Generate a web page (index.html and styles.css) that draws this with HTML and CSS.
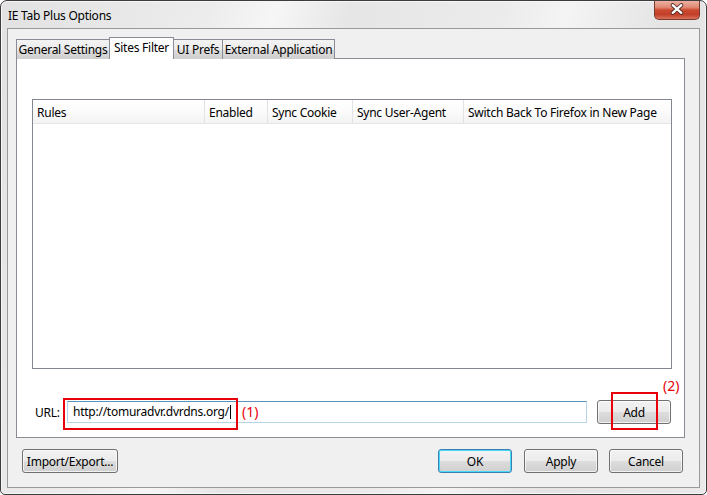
FILE: index.html
```html
<!DOCTYPE html>
<html lang="en">
<head>
    <meta charset="UTF-8">
    <title>IE Tab Plus Options</title>
    <link rel="stylesheet" href="styles.css">
</head>
<body>
<div class="window">
    <div class="titlebar">
        <span class="title">IE Tab Plus Options</span>
        <div class="close-btn">
            <svg width="46" height="19" viewBox="0 0 46 19">
                <path d="M18.5 5 L27.5 13 M27.5 5 L18.5 13" stroke="#4a2a24" stroke-width="4.2" stroke-linecap="round"/>
                <path d="M18.5 5 L27.5 13 M27.5 5 L18.5 13" stroke="#fff" stroke-width="2.4" stroke-linecap="round"/>
            </svg>
        </div>
    </div>

    <div class="client">
        <div class="tabs">
            <div class="tab tab-general">General Settings</div>
            <div class="tab tab-sites active">Sites Filter</div>
            <div class="tab tab-ui">UI Prefs</div>
            <div class="tab tab-ext">External Application</div>
        </div>

        <div class="panel">
            <div class="rules-list">
                <div class="list-header">
                    <div class="col col-rules">Rules</div>
                    <div class="col col-enabled">Enabled</div>
                    <div class="col col-cookie">Sync Cookie</div>
                    <div class="col col-agent">Sync User-Agent</div>
                    <div class="col col-switch">Switch Back To Firefox in New Page</div>
                </div>
            </div>

            <div class="url-row">
                <label class="url-label">URL:</label>
                <div class="url-input">http://tomuradvr.dvrdns.org/<span class="caret"></span></div>
                <button class="btn btn-add">Add</button>

                <!-- annotations -->
                <div class="mark mark-1"></div>
                <span class="note note-1">(1)</span>
                <div class="mark mark-2"></div>
                <span class="note note-2">(2)</span>
            </div>
        </div>

        <div class="footer">
            <button class="btn btn-import">Import/Export...</button>
            <div class="spacer"></div>
            <button class="btn btn-default">OK</button>
            <button class="btn">Apply</button>
            <button class="btn">Cancel</button>
        </div>
    </div>
</div>
</body>
</html>
```

FILE: styles.css
```css
html, body {
    margin: 0;
    padding: 0;
    background: #fff;
}
body {
    font-family: "Noto Sans", "Open Sans", sans-serif;
    font-size: 12px;
    letter-spacing: -0.25px;
    color: #000;
}
.window {
    width: 707px;
    height: 495px;
    box-sizing: border-box;
    border: 1px solid #3c3c3c;
    border-radius: 7px 7px 5px 5px;
    padding: 0 6px 6px 6px;
    display: flex;
    flex-direction: column;
    background: linear-gradient(105deg, #e2e2e2 0%, #ececec 25%, #f6f6f6 33%, #e6e6e6 42%, #ebebeb 60%, #f4f4f4 68%, #e4e4e4 80%, #e9e9e9 100%);
    box-shadow: inset 0 0 0 1px #f7f7f7;
}
.titlebar {
    height: 27px;
    display: flex;
    align-items: flex-start;
    justify-content: space-between;
}
.title {
    padding: 7px 0 0 1px;
    font-size: 12px;
    line-height: 16px;
}
.close-btn {
    width: 46px;
    height: 19px;
    box-sizing: border-box;
    border: 1px solid #7a3a2e;
    border-top: none;
    border-radius: 0 0 5px 5px;
    background: linear-gradient(to bottom, #ecb0a2 0%, #e08a74 35%, #cc4a30 50%, #c2402a 75%, #d9715a 100%);
    display: flex;
    align-items: center;
    justify-content: center;
    overflow: hidden;
}
.close-btn svg {
    display: block;
    margin-top: -1px;
}
.client {
    flex: 1;
    background: #f0f0f0;
    border: 1px solid #9a9a9a;
    display: flex;
    flex-direction: column;
}

/* tab strip */
.tabs {
    display: flex;
    align-items: flex-end;
    height: 21px;
    margin-top: 9px;
    padding-left: 8px;
    position: relative;
    z-index: 1;
    margin-bottom: -1px;
}
.tab {
    height: 20px;
    box-sizing: border-box;
    border: 1px solid #898c95;
    border-bottom: none;
    background: linear-gradient(to bottom, #f3f3f3 0%, #ebebeb 50%, #dddddd 51%, #cfcfcf 100%);
    margin-left: -1px;
    text-align: center;
    line-height: 19px;
    white-space: nowrap;
}
.tab-general {
    width: 94px;
    margin-left: 0;
}
.tab-sites {
    width: 65px;
}
.tab-ui {
    width: 50px;
}
.tab-ext {
    width: 113px;
}
.tab.active {
    height: 22px;
    background: #fff;
    line-height: 19px;
    position: relative;
    z-index: 2;
}

/* panel */
.panel {
    height: 380px;
    box-sizing: border-box;
    margin: 0 14px 0 8px;
    border: 1px solid #898c95;
    background: #fff;
    padding: 40px 12px 0 15px;
}
.rules-list {
    height: 270px;
    box-sizing: border-box;
    border: 1px solid #828790;
    background: #fff;
}
.list-header {
    display: flex;
    height: 23px;
    border-bottom: 1px solid #e5e5e5;
    background: linear-gradient(to bottom, #ffffff 0%, #fbfbfb 50%, #f3f3f3 100%);
}
.col {
    box-sizing: border-box;
    border-right: 1px solid #e3e3e3;
    padding: 3px 0 0 4px;
    line-height: 20px;
    white-space: nowrap;
}
.col-rules {
    width: 172px;
}
.col-enabled {
    width: 63px;
}
.col-cookie {
    width: 85px;
}
.col-agent {
    width: 111px;
}
.col-switch {
    flex: 1;
    border-right: none;
}

/* url row */
.url-row {
    position: relative;
    display: flex;
    align-items: center;
    height: 24px;
    margin-top: 31px;
}
.url-label {
    width: 35px;
    box-sizing: border-box;
    padding-left: 3px;
}
.url-input {
    width: 520px;
    height: 22px;
    box-sizing: border-box;
    border: 1px solid #b7d5ea;
    border-top-color: #5c93bc;
    padding-left: 5px;
    line-height: 20px;
    background: #fff;
}
.caret {
    display: inline-block;
    width: 1px;
    height: 14px;
    background: #000;
    vertical-align: -3px;
    margin-left: 1px;
}
.btn {
    height: 24px;
    box-sizing: border-box;
    border: 1px solid #707070;
    border-radius: 3px;
    background: linear-gradient(to bottom, #f2f2f2 0%, #ebebeb 50%, #dddddd 51%, #cfcfcf 100%);
    box-shadow: inset 0 0 0 1px rgba(255, 255, 255, 0.7);
    font-family: "Noto Sans", "Open Sans", sans-serif;
    font-size: 12px;
    letter-spacing: -0.25px;
    color: #000;
    padding: 0;
    width: 74px;
}
.btn-add {
    margin-left: 10px;
}
.mark {
    position: absolute;
    border: 2px solid #e8000b;
    box-sizing: border-box;
}
.mark-1 {
    left: 31px;
    top: -2px;
    width: 175px;
    height: 32px;
}
.mark-2 {
    left: 579px;
    top: -8px;
    width: 47px;
    height: 38px;
}
.note {
    position: absolute;
    color: #e8000b;
    font-size: 14px;
    letter-spacing: 0;
    line-height: 16px;
}
.note-1 {
    left: 210px;
    top: 4px;
}
.note-2 {
    left: 631px;
    top: -22px;
}

/* bottom buttons */
.footer {
    display: flex;
    align-items: center;
    margin-top: 11px;
    padding: 0 16px 0 14px;
    gap: 12px;
}
.btn-import {
    width: 96px;
}
.spacer {
    flex: 1;
}
.btn-default {
    border-color: #3c7fb1;
    box-shadow: inset 0 0 0 1px #48d8fb;
}
.footer .btn:last-child {
    margin-left: -1px;
}
```
